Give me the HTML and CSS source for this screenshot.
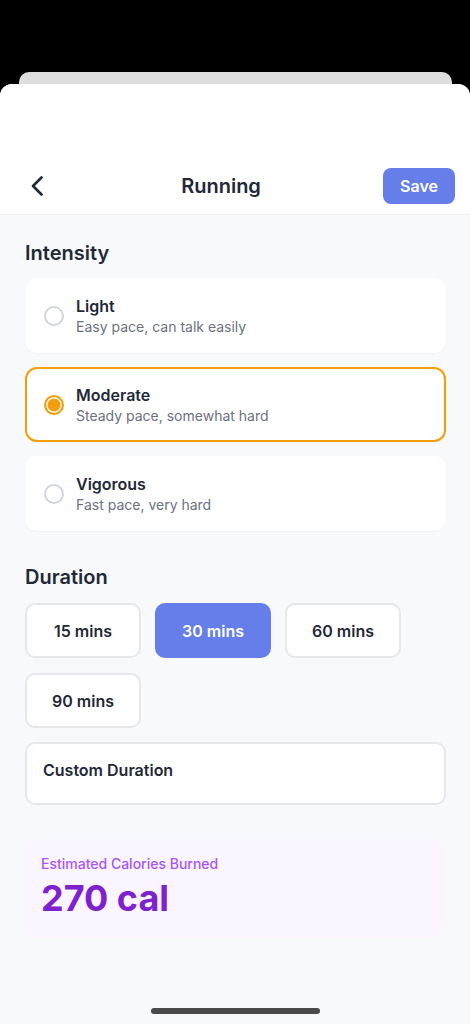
FILE: index.html
```html
<!DOCTYPE html>
<html lang="en">
<head>
<meta charset="utf-8">
<title>Running</title>
<link rel="stylesheet" href="styles.css">
</head>
<body>
<div class="backcard"></div>
<div class="sheet">
  <header class="header">
    <button class="back" aria-label="Back">
      <svg width="14" height="20" viewBox="0 0 14 20"><polyline points="11.5,1.5 3,10 11.5,18.5" fill="none" stroke="#1f2937" stroke-width="2.6" stroke-linecap="round" stroke-linejoin="round"/></svg>
    </button>
    <h1 class="title">Running</h1>
    <button class="save">Save</button>
  </header>
  <main class="content">
    <h2 class="section-title">Intensity</h2>
    <div class="options">
      <div class="option">
        <span class="radio"></span>
        <div class="option-text">
          <div class="option-title">Light</div>
          <div class="option-sub">Easy pace, can talk easily</div>
        </div>
      </div>
      <div class="option selected">
        <span class="radio on"></span>
        <div class="option-text">
          <div class="option-title">Moderate</div>
          <div class="option-sub">Steady pace, somewhat hard</div>
        </div>
      </div>
      <div class="option">
        <span class="radio"></span>
        <div class="option-text">
          <div class="option-title">Vigorous</div>
          <div class="option-sub">Fast pace, very hard</div>
        </div>
      </div>
    </div>
    <h2 class="section-title duration-title">Duration</h2>
    <div class="durations">
      <button class="dur">15 mins</button>
      <button class="dur active">30 mins</button>
      <button class="dur">60 mins</button>
      <button class="dur">90 mins</button>
    </div>
    <div class="custom">Custom Duration</div>
    <div class="calories">
      <div class="cal-label">Estimated Calories Burned</div>
      <div class="cal-value">270 cal</div>
    </div>
  </main>
</div>
<div class="home-indicator"></div>
</body>
</html>
```
FILE: styles.css
```css
* { box-sizing: border-box; }
html, body { margin: 0; padding: 0; }
body {
  background: #000;
  font-family: Inter, "Noto Sans", sans-serif;
  color: #1f2937;
  height: 1024px;
  display: flex;
  flex-direction: column;
  overflow: hidden;
}
.backcard {
  margin: 72px 18px 0 19px;
  height: 12px;
  flex: none;
  background: #dedede;
  border-radius: 10px 10px 0 0;
}
.sheet {
  flex: 1;
  background: #f8f9fb;
  border-radius: 12px 12px 0 0;
  overflow: hidden;
}
.header {
  background: #fff;
  padding: 80px 15px 6px;
  border-bottom: 1px solid #eceef1;
  display: flex;
  align-items: center;
  justify-content: space-between;
}
.back {
  width: 44px;
  height: 44px;
  border: 0;
  background: none;
  padding: 0;
  display: flex;
  align-items: center;
  justify-content: center;
}
.title {
  margin: 0;
  font-size: 20px;
  font-weight: 600;
  line-height: 28px;
  color: #1f2937;
}
.save {
  width: 72px;
  height: 36px;
  border: 0;
  border-radius: 8px;
  background: #667eea;
  color: #fff;
  font-family: inherit;
  font-size: 16px;
  font-weight: 600;
}
.content {
  padding: 24px 24px 0 25px;
}
.section-title {
  margin: 0 0 11px;
  font-size: 20px;
  line-height: 28px;
  font-weight: 600;
  color: #1f2937;
}
.duration-title { margin-top: 32px; margin-bottom: 12px; }
.options {
  display: flex;
  flex-direction: column;
  gap: 14px;
}
.option {
  height: 75px;
  background: #fff;
  border: 2px solid transparent;
  border-radius: 12px;
  display: flex;
  align-items: center;
  padding: 0 17px;
  gap: 12px;
  box-shadow: 0 1px 2px rgba(0,0,0,0.03);
}
.option.selected { border-color: #f59e0b; }
.radio {
  width: 20px;
  height: 20px;
  border-radius: 50%;
  border: 2px solid #d1d5db;
  flex: none;
}
.radio.on {
  border-color: #f59e0b;
  background: #f59e0b;
  box-shadow: inset 0 0 0 1.5px #fff;
}
.option-title {
  font-size: 16px;
  line-height: 22px;
  font-weight: 600;
  color: #1f2937;
}
.option-sub {
  font-size: 14px;
  line-height: 19px;
  color: #6b7280;
}
.durations {
  display: flex;
  flex-wrap: wrap;
  gap: 15px 14px;
}
.dur {
  width: 116px;
  height: 55px;
  border: 2px solid #e5e7eb;
  border-radius: 10px;
  background: #fff;
  font-family: inherit;
  font-size: 16px;
  font-weight: 600;
  color: #1f2937;
}
.dur.active {
  background: #667eea;
  border-color: #667eea;
  color: #fff;
}
.custom {
  margin-top: 14px;
  height: 63px;
  border: 2px solid #e5e7eb;
  border-radius: 10px;
  background: #fff;
  padding: 15px 16px 0;
  font-size: 16px;
  line-height: 22px;
  font-weight: 600;
  color: #1f2937;
}
.calories {
  margin-top: 34px;
  background: #faf5ff;
  border-radius: 12px;
  padding: 15px 16px 17px;
  height: 99px;
}
.cal-label {
  font-size: 14px;
  line-height: 20px;
  font-weight: 500;
  color: #a855f7;
}
.cal-value {
  margin-top: 2px;
  font-size: 36px;
  line-height: 44px;
  font-weight: 700;
  color: #7e22ce;
}
.home-indicator {
  position: fixed;
  left: 151px;
  top: 1008px;
  width: 169px;
  height: 6px;
  border-radius: 3px;
  background: #4a4a4a;
}
```
